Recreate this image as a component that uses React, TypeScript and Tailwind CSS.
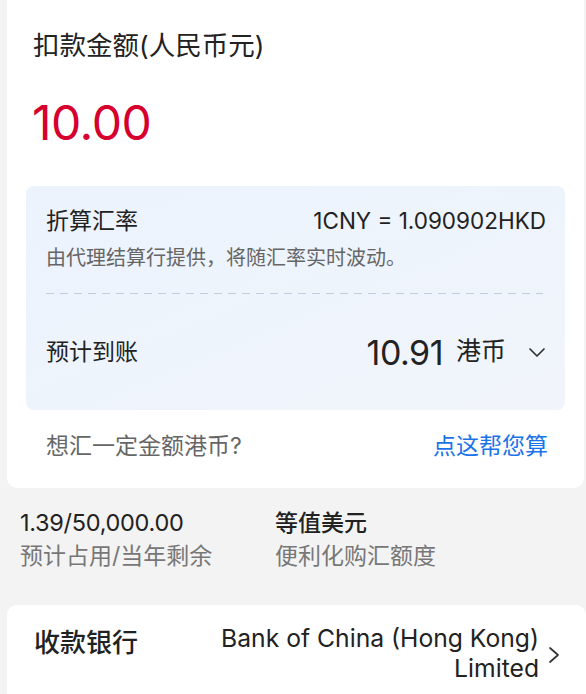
import React from "react";

export default function App() {
  return (
    <div
      className="w-full h-[694px] overflow-hidden bg-[#f3f3f3] text-[#222]"
      style={{ fontFamily: '"Inter", "Noto Sans CJK SC", sans-serif' }}
    >
      <div className="ml-[7px] mr-[2px] bg-white rounded-b-[10px] pt-[28px] pb-[27px]">
        <div className="pl-[26px] text-[26.5px] leading-[34px]">扣款金额(人民币元)</div>
        <div className="pl-[25px] mt-[33px] text-[48px] leading-[56px] text-[#d6002f] tracking-[-0.5px]">10.00</div>
        <div className="mt-[35px] mx-[19px] rounded-[8px] bg-gradient-to-br from-[#ecf3fd] to-[#f1f5fb] pt-[20px] pb-[38px] pl-[20px] pr-[19px]">
          <div className="flex justify-between items-center h-[30px]">
            <span className="text-[23px]">折算汇率</span>
            <span className="text-[22.5px]">1CNY = 1.090902HKD</span>
          </div>
          <div className="mt-[9px] text-[20px] leading-[26px] text-[#666]">由代理结算行提供，将随汇率实时波动。</div>
          <div className="mt-[22px] mr-[3px] h-px bg-[linear-gradient(to_right,#bfcde0_55%,transparent_0)] bg-[length:14px_1px] bg-repeat-x" />
          <div className="mt-[38px] flex justify-between items-center h-[40px]">
            <span className="text-[23px]">预计到账</span>
            <div className="flex items-center">
              <span className="text-[34px] tracking-[-0.5px]">10.91</span>
              <span className="ml-[13px] text-[25px]">港币</span>
              <svg className="ml-[22px]" width="18" height="11" viewBox="0 0 18 11" fill="none">
                <polyline points="2,2 9,9 16,2" stroke="#333" strokeWidth="1.7" strokeLinecap="round" strokeLinejoin="round" />
              </svg>
            </div>
          </div>
        </div>
        <div className="mt-[21px] pl-[39px] pr-[36px] flex justify-between items-center h-[30px] text-[23px]">
          <span className="text-[#666]">想汇一定金额港币?</span>
          <span className="text-[#1a73e8]">点这帮您算</span>
        </div>
      </div>

      <div className="mt-[21px] pl-[20px] grid grid-cols-[255px_1fr]">
        <div>
          <div className="text-[23.5px] leading-[28px] tracking-[-0.3px]">1.39/50,000.00</div>
          <div className="mt-[5px] text-[23px] leading-[28px] text-[#777]">预计占用/当年剩余</div>
        </div>
        <div>
          <div className="text-[23px] leading-[28px] font-medium">等值美元</div>
          <div className="mt-[5px] text-[23px] leading-[28px] text-[#777]">便利化购汇额度</div>
        </div>
      </div>

      <div className="mt-[35px] ml-[7px] bg-white rounded-t-[10px] pt-[18px] pl-[27px] pr-[26px] h-[120px] flex justify-between items-start">
        <span className="mt-[5px] text-[26px] leading-[30px] font-medium">收款银行</span>
        <div className="flex items-center">
          <div className="text-right text-[24.7px] leading-[30px]">
            <div>Bank of China (Hong Kong)</div>
            <div>Limited</div>
          </div>
          <svg className="ml-[9px] mt-[4px]" width="12" height="18" viewBox="0 0 12 18" fill="none">
            <polyline points="2,2 10,9 2,16" stroke="#333" strokeWidth="1.7" strokeLinecap="round" strokeLinejoin="round" />
          </svg>
        </div>
      </div>
    </div>
  );
}
